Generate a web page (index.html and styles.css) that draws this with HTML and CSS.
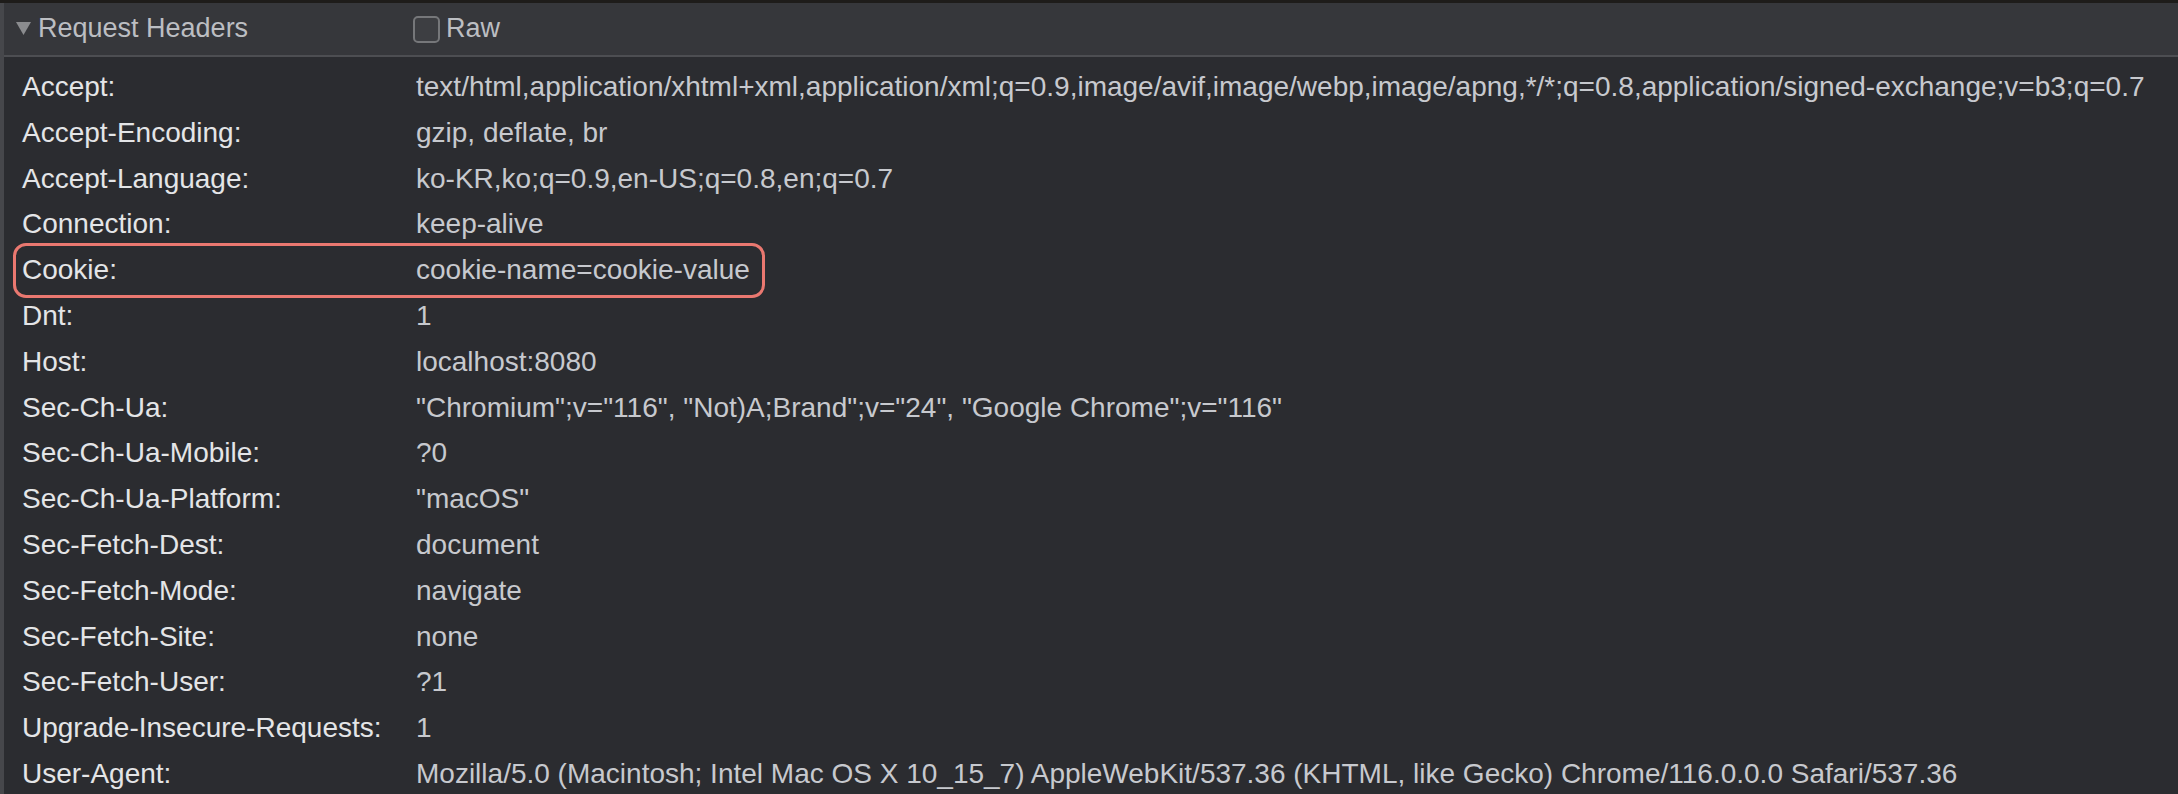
FILE: index.html
```html
<!DOCTYPE html>
<html>
<head>
<meta charset="utf-8">
<link rel="stylesheet" href="styles.css">
</head>
<body>
<div class="topbar"></div>
<div class="panel">
  <div class="section-head">
    <div class="title">
      <svg class="disclosure" width="15" height="13" viewBox="0 0 15 13"><polygon points="0,0 15,0 7.5,13" fill="#8b8c8f"/></svg>
      <span>Request Headers</span>
    </div>
    <label class="raw"><span class="checkbox"></span><span>Raw</span></label>
  </div>
  <div class="rows">
    <div class="row"><div class="name">Accept:</div><div class="value">text/html,application/xhtml+xml,application/xml;q=0.9,image/avif,image/webp,image/apng,*/*;q=0.8,application/signed-exchange;v=b3;q=0.7</div></div>
    <div class="row"><div class="name">Accept-Encoding:</div><div class="value">gzip, deflate, br</div></div>
    <div class="row"><div class="name">Accept-Language:</div><div class="value">ko-KR,ko;q=0.9,en-US;q=0.8,en;q=0.7</div></div>
    <div class="row"><div class="name">Connection:</div><div class="value">keep-alive</div></div>
    <div class="row highlighted"><div class="name">Cookie:</div><div class="value">cookie-name=cookie-value</div><div class="mark"></div></div>
    <div class="row"><div class="name">Dnt:</div><div class="value">1</div></div>
    <div class="row"><div class="name">Host:</div><div class="value">localhost:8080</div></div>
    <div class="row"><div class="name">Sec-Ch-Ua:</div><div class="value">"Chromium";v="116", "Not)A;Brand";v="24", "Google Chrome";v="116"</div></div>
    <div class="row"><div class="name">Sec-Ch-Ua-Mobile:</div><div class="value">?0</div></div>
    <div class="row"><div class="name">Sec-Ch-Ua-Platform:</div><div class="value">"macOS"</div></div>
    <div class="row"><div class="name">Sec-Fetch-Dest:</div><div class="value">document</div></div>
    <div class="row"><div class="name">Sec-Fetch-Mode:</div><div class="value">navigate</div></div>
    <div class="row"><div class="name">Sec-Fetch-Site:</div><div class="value">none</div></div>
    <div class="row"><div class="name">Sec-Fetch-User:</div><div class="value">?1</div></div>
    <div class="row"><div class="name">Upgrade-Insecure-Requests:</div><div class="value">1</div></div>
    <div class="row"><div class="name">User-Agent:</div><div class="value">Mozilla/5.0 (Macintosh; Intel Mac OS X 10_15_7) AppleWebKit/537.36 (KHTML, like Gecko) Chrome/116.0.0.0 Safari/537.36</div></div>
  </div>
</div>
</body>
</html>
```
FILE: styles.css
```css
html, body {
  margin: 0;
  padding: 0;
  background: #2b2c30;
  overflow: hidden;
}
body {
  font-family: "Liberation Sans", Arial, sans-serif;
  font-size: 28px;
  width: 2178px;
  height: 794px;
}
.topbar {
  height: 3px;
  background: #1e1c1a;
}
.panel {
  border-left: 4px solid #46474b;
  height: 791px;
  box-sizing: border-box;
}
.section-head {
  height: 52px;
  background: #36373b;
  border-bottom: 2px solid #4d4e52;
  display: flex;
  align-items: flex-start;
  line-height: 50px;
  color: #bcbec2;
  font-size: 27px;
}
.title {
  display: flex;
  align-items: center;
  width: 384px;
  padding-left: 12px;
  height: 50px;
}
.disclosure {
  margin-right: 7px;
  margin-top: 1px;
}
.raw {
  display: flex;
  align-items: center;
  height: 50px;
  margin-left: 13px;
}
.checkbox {
  width: 23px;
  height: 23px;
  border: 2px solid #76777a;
  border-radius: 5px;
  background: #3d3e42;
  margin-right: 6px;
  margin-top: 2px;
}
.rows {
  padding-top: 7px;
}
.row {
  position: relative;
  display: grid;
  grid-template-columns: 394px 1fr;
  padding-left: 18px;
  height: 45.8px;
  line-height: 45.8px;
  white-space: nowrap;
}
.name {
  color: #e4e5e7;
}
.value {
  color: #c7c9ce;
}
.mark {
  position: absolute;
  left: 9px;
  top: -4px;
  width: 752px;
  height: 55px;
  box-sizing: border-box;
  border: 3px solid #ea7870;
  border-radius: 13px;
  pointer-events: none;
}
```
